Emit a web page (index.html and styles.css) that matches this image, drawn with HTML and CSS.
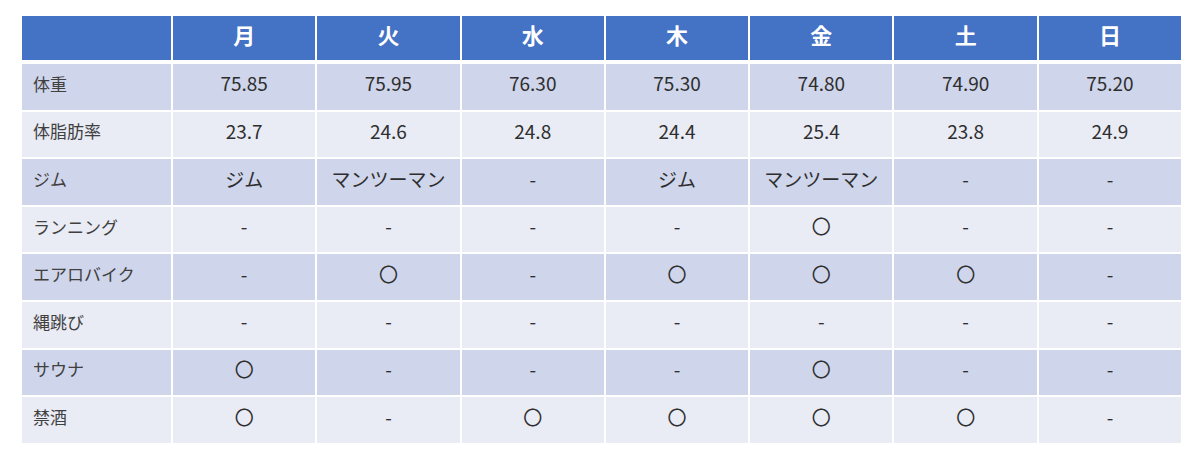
FILE: index.html
```html
<!DOCTYPE html>
<html lang="ja">
<head>
<meta charset="utf-8">
<link rel="stylesheet" href="styles.css">
</head>
<body>
<table class="log">
  <colgroup>
    <col class="col-label">
    <col span="7" class="col-day">
  </colgroup>
  <thead>
    <tr>
      <th></th><th>月</th><th>火</th><th>水</th><th>木</th><th>金</th><th>土</th><th>日</th>
    </tr>
  </thead>
  <tbody>
    <tr><td class="label">体重</td><td>75.85</td><td>75.95</td><td>76.30</td><td>75.30</td><td>74.80</td><td>74.90</td><td>75.20</td></tr>
    <tr><td class="label">体脂肪率</td><td>23.7</td><td>24.6</td><td>24.8</td><td>24.4</td><td>25.4</td><td>23.8</td><td>24.9</td></tr>
    <tr><td class="label">ジム</td><td>ジム</td><td>マンツーマン</td><td>-</td><td>ジム</td><td>マンツーマン</td><td>-</td><td>-</td></tr>
    <tr><td class="label">ランニング</td><td>-</td><td>-</td><td>-</td><td>-</td><td>〇</td><td>-</td><td>-</td></tr>
    <tr><td class="label">エアロバイク</td><td>-</td><td>〇</td><td>-</td><td>〇</td><td>〇</td><td>〇</td><td>-</td></tr>
    <tr><td class="label">縄跳び</td><td>-</td><td>-</td><td>-</td><td>-</td><td>-</td><td>-</td><td>-</td></tr>
    <tr><td class="label">サウナ</td><td>〇</td><td>-</td><td>-</td><td>-</td><td>〇</td><td>-</td><td>-</td></tr>
    <tr><td class="label">禁酒</td><td>〇</td><td>-</td><td>〇</td><td>〇</td><td>〇</td><td>〇</td><td>-</td></tr>
  </tbody>
</table>
</body>
</html>
```

FILE: styles.css
```css
html, body {
  margin: 0;
  padding: 0;
  background: #ffffff;
}

body {
  padding: 14px 0 0 20px;
  font-family: "Noto Sans CJK JP", "Noto Sans", sans-serif;
}

.log {
  border-collapse: collapse;
  table-layout: fixed;
  width: 1161px;
}

.col-label {
  width: 151px;
}

.col-day {
  width: 144.3px;
}

.log th,
.log td {
  border: 2px solid #ffffff;
  padding: 0;
  text-align: center;
  vertical-align: middle;
  line-height: 1.3;
}

.log thead th {
  background: #4472c4;
  color: #ffffff;
  font-weight: 700;
  font-size: 22px;
  height: 37px;
  padding-bottom: 7px;
  border-bottom-width: 4px;
}

.log tbody td {
  height: 39.6px;
  padding-bottom: 6px;
  font-size: 19px;
  color: #2e2e2e;
}

.log tbody tr:nth-child(odd) td {
  background: #cfd5ea;
}

.log tbody tr:nth-child(even) td {
  background: #e9ebf5;
}

.log td.label {
  text-align: left;
  padding-left: 11px;
  font-size: 17px;
  color: #404040;
}
```
